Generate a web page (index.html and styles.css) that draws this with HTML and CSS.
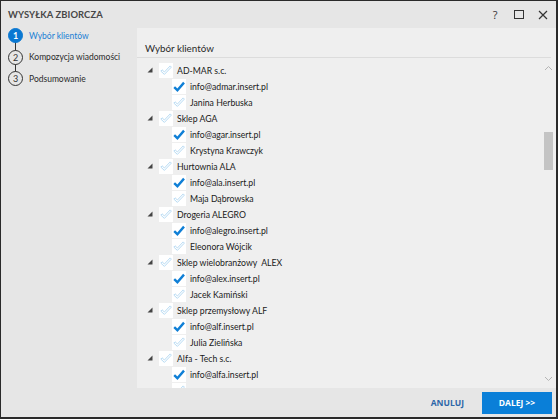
FILE: index.html
```html
<!DOCTYPE html>
<html lang="pl">
<head>
<meta charset="utf-8">
<title>Wysyłka zbiorcza</title>
<link rel="stylesheet" href="styles.css">
</head>
<body>
<div class="window">
  <div class="titlebar">
    <div class="title">WYSYŁKA ZBIORCZA</div>
    <div class="controls">
      <span class="ctl help">?</span>
      <span class="ctl max"><span class="sq"></span></span>
      <span class="ctl close">
        <svg width="10" height="10" viewBox="0 0 10 10"><path d="M1 1L9 9M9 1L1 9" stroke="#333" stroke-width="1.2" fill="none"/></svg>
      </span>
    </div>
  </div>
  <div class="main">
    <div class="sidebar">
      <div class="step active"><span class="num">1</span><span class="label">Wybór klientów</span></div>
      <div class="step"><span class="num">2</span><span class="label">Kompozycja wiadomości</span></div>
      <div class="step"><span class="num">3</span><span class="label">Podsumowanie</span></div>
    </div>
    <div class="content">
      <div class="heading">Wybór klientów</div>
      <div class="treewrap">
        <div class="tree" id="tree"></div>
        <div class="scrollbar">
          <svg class="arr" width="9" height="6" viewBox="0 0 9 6"><path d="M1 5L4.5 1.5L8 5" stroke="#b5b5b5" stroke-width="1" fill="none"/></svg>
          <div class="track"><div class="thumb"></div></div>
          <svg class="arr" width="9" height="6" viewBox="0 0 9 6"><path d="M1 1L4.5 4.5L8 1" stroke="#b5b5b5" stroke-width="1" fill="none"/></svg>
        </div>
      </div>
    </div>
  </div>
  <div class="footer">
    <button class="btn cancel">ANULUJ</button>
    <button class="btn next">DALEJ &gt;&gt;</button>
  </div>
</div>
<script>
var data = [
  ["AD-MAR s.c.", "info@admar.insert.pl", "Janina Herbuska"],
  ["Sklep AGA", "info@agar.insert.pl", "Krystyna Krawczyk"],
  ["Hurtownia ALA", "info@ala.insert.pl", "Maja Dąbrowska"],
  ["Drogeria ALEGRO", "info@alegro.insert.pl", "Eleonora Wójcik"],
  ["Sklep wielobranżowy  ALEX", "info@alex.insert.pl", "Jacek Kamiński"],
  ["Sklep przemysłowy ALF", "info@alf.insert.pl", "Julia Zielińska"],
  ["Alfa - Tech s.c.", "info@alfa.insert.pl", ""]
];
var on = '<svg width="12" height="11" viewBox="0 0 12 11"><path d="M1.2 6.2L4.4 9.2L11 1.6" stroke="#0f7fd6" stroke-width="2.4" fill="none" stroke-linejoin="miter"/></svg>';
var off = '<svg width="12" height="11" viewBox="0 0 12 11"><path d="M0.8 6.1L2.1 4.8L4.4 7L10.2 0.9L11.4 2.1L4.4 9.4Z" stroke="#b8dbf3" stroke-width="1" fill="#fff"/></svg>';
var tri = '<svg width="6" height="6" viewBox="0 0 6 6"><path d="M5.5 0.5L5.5 5.5L0.5 5.5Z" fill="#444"/></svg>';
var html = "";
data.forEach(function (g) {
  html += '<div class="row parent"><span class="tri">' + tri + '</span><span class="cb">' + off + '</span><span class="txt">' + g[0] + '</span></div>';
  html += '<div class="row child"><span class="cb">' + on + '</span><span class="txt">' + g[1] + '</span></div>';
  html += '<div class="row child"><span class="cb">' + off + '</span>' + (g[2] ? '<span class="txt">' + g[2] + '</span>' : '') + '</div>';
});
document.getElementById("tree").innerHTML = html;
</script>
</body>
</html>
```
FILE: styles.css
```css
* { box-sizing: border-box; }
html, body { margin: 0; padding: 0; }
body {
  width: 558px;
  height: 419px;
  overflow: hidden;
  font-family: "Lato", "Open Sans", sans-serif;
  background: #e6e6e6;
}
.window {
  width: 558px;
  height: 419px;
  border: 1px solid #2a2a2a;
  border-right-width: 2px;
  border-bottom-width: 2px;
  background: #e6e6e6;
  display: flex;
  flex-direction: column;
}
.titlebar {
  height: 27px;
  flex: none;
  display: flex;
  align-items: center;
  justify-content: space-between;
  padding: 0 1px 0 7px;
}
.title {
  font-size: 9.4px;
  font-weight: 700;
  color: #474747;
  letter-spacing: 0.1px;
}
.controls {
  display: flex;
  align-items: center;
}
.ctl {
  width: 24px;
  display: flex;
  justify-content: center;
  align-items: center;
  color: #333;
}
.help { font-size: 11px; font-family: "Open Sans", sans-serif; }
.sq {
  width: 10px;
  height: 9px;
  border: 1.5px solid #333;
}
.main {
  flex: 1;
  display: flex;
  min-height: 0;
}
.sidebar {
  width: 136px;
  flex: none;
  margin-top: -3px;
  padding-left: 7px;
}
.step {
  height: 21.5px;
  display: flex;
  align-items: center;
  position: relative;
}
.step + .step::before {
  content: "";
  position: absolute;
  left: 7px;
  top: -8px;
  height: 16px;
  border-left: 1px solid #333;
}
.num {
  width: 15px;
  height: 15px;
  border-radius: 50%;
  border: 1px solid #333;
  background: #e6e6e6;
  font-size: 9px;
  color: #333;
  display: flex;
  align-items: center;
  justify-content: center;
  position: relative;
  z-index: 1;
}
.step.active .num {
  background: #0a78d2;
  border-color: #0a78d2;
  color: #fff;
  font-weight: 700;
}
.label {
  margin-left: 6px;
  font-size: 8.5px;
  color: #2a2a2a;
}
.step.active .label { color: #1a7fd4; }
.content {
  flex: 1;
  background: #efefef;
  display: flex;
  flex-direction: column;
  min-width: 0;
}
.heading {
  height: 30px;
  flex: none;
  margin-right: 5px;
  padding: 14px 0 0 8px;
  font-size: 9.8px;
  line-height: 12px;
  color: #2a2a2a;
  border-bottom: 1px solid #dcdcdc;
}
.treewrap {
  flex: 1;
  display: flex;
  min-height: 0;
  overflow: hidden;
}
.tree {
  flex: 1;
  padding-top: 4px;
  overflow: hidden;
}
.row {
  height: 16px;
  display: flex;
  align-items: center;
  font-size: 8.7px;
  color: #1a1a1a;
}
.parent { padding-left: 10px; }
.child { padding-left: 35px; }
.tri {
  width: 12px;
  display: flex;
  align-items: center;
}
.cb {
  width: 14px;
  height: 15px;
  background: #fff;
  display: flex;
  align-items: center;
  justify-content: center;
  flex: none;
}
.txt {
  margin-left: 4px;
  white-space: pre;
}
.scrollbar {
  width: 16px;
  flex: none;
  display: flex;
  flex-direction: column;
  align-items: center;
  padding: 7px 0 6px;
}
.track {
  flex: 1;
  width: 9px;
  padding-top: 61px;
}
.thumb {
  width: 9px;
  height: 38px;
  background: #c4c4c4;
}
.footer {
  height: 29px;
  flex: none;
  display: flex;
  align-items: center;
  justify-content: flex-end;
  padding-right: 4px;
}
.btn {
  font-family: "Open Sans", sans-serif;
  font-weight: 700;
  font-size: 8.5px;
  border: none;
  cursor: pointer;
}
.cancel {
  background: transparent;
  color: #2d66a8;
  margin-right: 18px;
  padding: 0;
}
.next {
  width: 70px;
  height: 22px;
  background: #0a7fd8;
  color: #fff;
}
```
